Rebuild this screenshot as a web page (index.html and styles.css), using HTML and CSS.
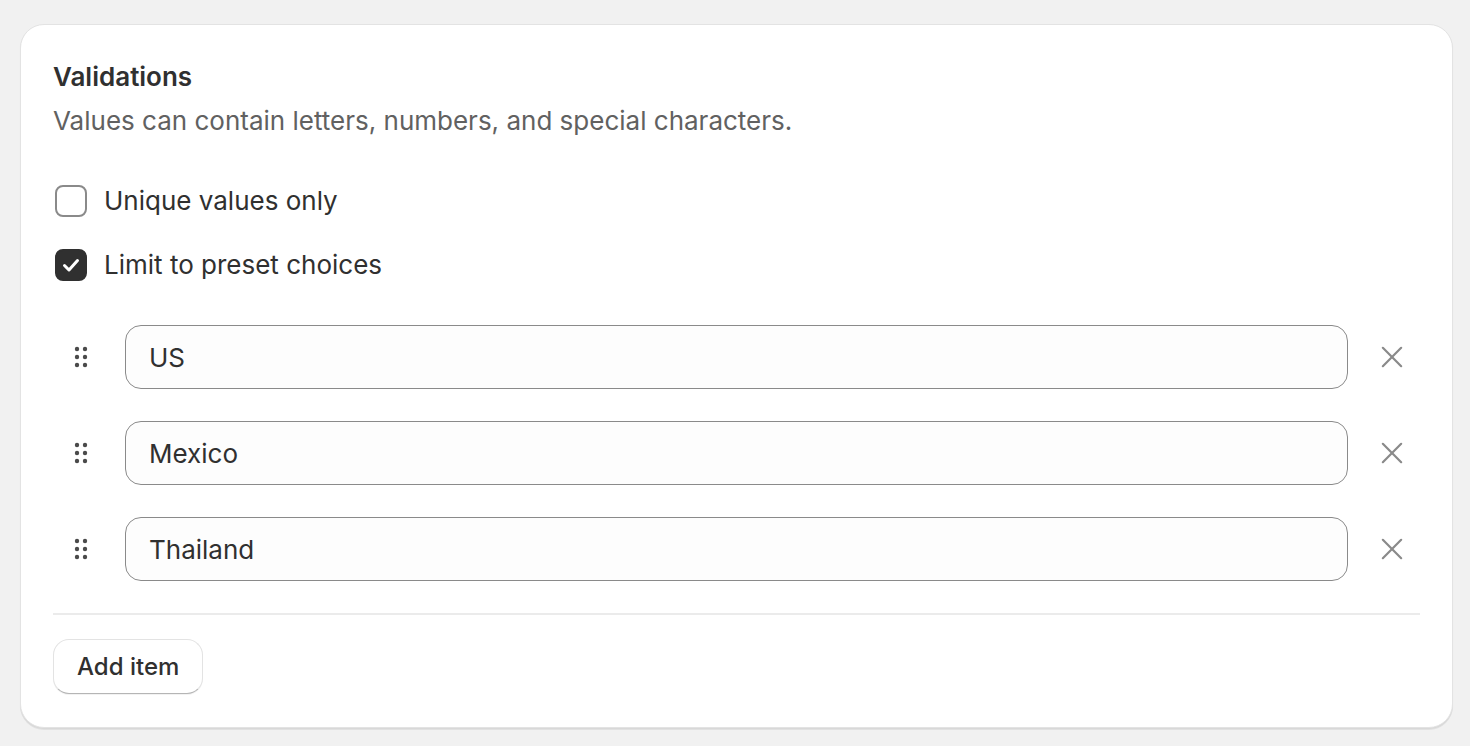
FILE: index.html
```html
<!DOCTYPE html>
<html lang="en">
<head>
<meta charset="utf-8">
<title>Validations</title>
<link rel="stylesheet" href="styles.css">
</head>
<body>
<div class="page">
  <section class="card">
    <h2 class="title">Validations</h2>
    <p class="desc">Values can contain letters, numbers, and special characters.</p>

    <div class="checks">
      <label class="check">
        <span class="box"></span>
        <span class="check-label">Unique values only</span>
      </label>
      <label class="check">
        <span class="box box-on">
          <svg viewBox="0 0 32 32" width="32" height="32"><path d="M9.5 16.5 L14 21 L22.5 11.5" fill="none" stroke="#fff" stroke-width="3" stroke-linecap="round" stroke-linejoin="round"/></svg>
        </span>
        <span class="check-label">Limit to preset choices</span>
      </label>
    </div>

    <div class="items">
      <div class="item">
        <span class="handle"><svg viewBox="0 0 16 24" width="16" height="24"><g fill="#4a4a4a"><circle cx="4" cy="4" r="2.2"/><circle cx="12" cy="4" r="2.2"/><circle cx="4" cy="12" r="2.2"/><circle cx="12" cy="12" r="2.2"/><circle cx="4" cy="20" r="2.2"/><circle cx="12" cy="20" r="2.2"/></g></svg></span>
        <div class="field">US</div>
        <span class="remove"><svg viewBox="0 0 24 24" width="24" height="24"><path d="M2 2 L22 22 M22 2 L2 22" stroke="#8a8a8a" stroke-width="2.4" stroke-linecap="round"/></svg></span>
      </div>
      <div class="item">
        <span class="handle"><svg viewBox="0 0 16 24" width="16" height="24"><g fill="#4a4a4a"><circle cx="4" cy="4" r="2.2"/><circle cx="12" cy="4" r="2.2"/><circle cx="4" cy="12" r="2.2"/><circle cx="12" cy="12" r="2.2"/><circle cx="4" cy="20" r="2.2"/><circle cx="12" cy="20" r="2.2"/></g></svg></span>
        <div class="field">Mexico</div>
        <span class="remove"><svg viewBox="0 0 24 24" width="24" height="24"><path d="M2 2 L22 22 M22 2 L2 22" stroke="#8a8a8a" stroke-width="2.4" stroke-linecap="round"/></svg></span>
      </div>
      <div class="item">
        <span class="handle"><svg viewBox="0 0 16 24" width="16" height="24"><g fill="#4a4a4a"><circle cx="4" cy="4" r="2.2"/><circle cx="12" cy="4" r="2.2"/><circle cx="4" cy="12" r="2.2"/><circle cx="12" cy="12" r="2.2"/><circle cx="4" cy="20" r="2.2"/><circle cx="12" cy="20" r="2.2"/></g></svg></span>
        <div class="field">Thailand</div>
        <span class="remove"><svg viewBox="0 0 24 24" width="24" height="24"><path d="M2 2 L22 22 M22 2 L2 22" stroke="#8a8a8a" stroke-width="2.4" stroke-linecap="round"/></svg></span>
      </div>
    </div>

    <hr class="divider">

    <div class="actions">
      <button class="btn" type="button">Add item</button>
    </div>
  </section>
</div>
</body>
</html>
```

FILE: styles.css
```css
* { box-sizing: border-box; }

html, body {
  margin: 0;
  padding: 0;
  background: #f1f1f1;
  font-family: Inter, "Noto Sans", "Liberation Sans", sans-serif;
  color: #303030;
}

.page {
  padding: 24px 17px 19px 20px;
}

.card {
  background: #ffffff;
  border: 1px solid #e3e3e3;
  border-radius: 24px;
  box-shadow: 0 2px 0 rgba(0, 0, 0, 0.06), 0 1px 1px rgba(0, 0, 0, 0.05);
  padding: 32px 32px 33px 32px;
  display: flex;
  flex-direction: column;
}

.title {
  margin: 0;
  font-size: 26px;
  line-height: 40px;
  font-weight: 600;
  color: #303030;
}

.desc {
  margin: 4px 0 0 0;
  font-size: 26px;
  line-height: 40px;
  font-weight: 400;
  color: #616161;
}

.checks {
  margin-top: 40px;
  padding-left: 2px;
  display: flex;
  flex-direction: column;
  gap: 24px;
}

.check {
  display: flex;
  align-items: center;
  gap: 17px;
  height: 40px;
}

.box {
  width: 32px;
  height: 32px;
  border: 2px solid #8a8a8a;
  border-radius: 8px;
  background: #fff;
  display: flex;
  align-items: center;
  justify-content: center;
  flex: none;
}

.box-on {
  background: #303030;
  border-color: #303030;
}

.box-on svg {
  display: block;
  margin: -2px;
}

.check-label {
  font-size: 26px;
  line-height: 40px;
  color: #303030;
}

.items {
  margin-top: 40px;
  display: flex;
  flex-direction: column;
  gap: 32px;
}

.item {
  display: flex;
  align-items: center;
  gap: 16px;
}

.handle {
  width: 56px;
  height: 64px;
  display: flex;
  align-items: center;
  justify-content: center;
  flex: none;
}

.field {
  flex: 1;
  height: 64px;
  border: 1.5px solid #8a8a8a;
  border-radius: 16px;
  background: #fdfdfd;
  padding: 0 23px;
  display: flex;
  align-items: center;
  font-size: 26px;
  color: #303030;
}

.remove {
  width: 56px;
  height: 64px;
  display: flex;
  align-items: center;
  justify-content: center;
  flex: none;
}

.remove svg {
  width: 22px;
  height: 22px;
}

.divider {
  margin: 32px 0 0 0;
  border: 0;
  height: 2px;
  background: #ebebeb;
}

.actions {
  margin-top: 24px;
  display: flex;
}

.btn {
  font-family: inherit;
  font-size: 24px;
  font-weight: 550;
  color: #303030;
  background: #ffffff;
  height: 55px;
  padding: 0 23px;
  border: 1.5px solid #e3e3e3;
  border-bottom-color: #b5b5b5;
  border-radius: 16px;
  box-shadow: 0 1px 0 rgba(0, 0, 0, 0.05);
}
```
